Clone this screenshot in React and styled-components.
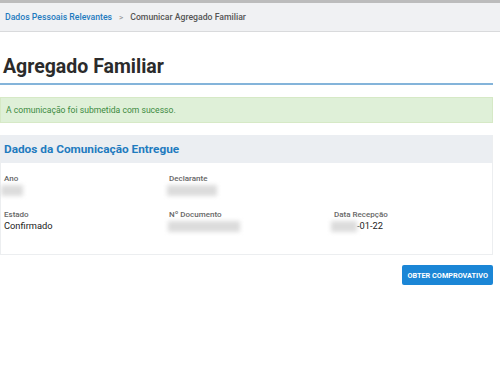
import React from "react";
import styled, { createGlobalStyle } from "styled-components";

const Global = createGlobalStyle`
  html, body { margin: 0; padding: 0; background: #fff; }
  body { font-family: Roboto, "Noto Sans", Arial, sans-serif; color: #333; }
`;

const Page = styled.div`
  width: 500px;
  min-height: 378px;
  display: flex;
  flex-direction: column;
  border-top: 3px solid #bcbcbc;
  box-sizing: border-box;
`;

const Breadcrumb = styled.nav`
  height: 28px;
  background: #f0f1f3;
  border-bottom: 1px solid #d9dadc;
  display: flex;
  align-items: center;
  padding-left: 5px;
  gap: 7px;
  font-size: 8.7px;
  font-weight: 500;
`;

const Crumb = styled.span`
  color: ${(p) => (p.$active ? "#1f7bbf" : "#555")};
`;

const Sep = styled.span`
  color: #999;
  font-size: 8px;
`;

const Content = styled.main`
  padding: 0 7px 0 0;
  display: flex;
  flex-direction: column;
`;

const Title = styled.h1`
  margin: 23px 0 0 0;
  padding: 0 0 4px 3px;
  font-size: 19.5px;
  font-weight: 700;
  color: #2b2b2b;
  line-height: 24px;
  border-bottom: 2px solid #84b4da;
`;

const Alert = styled.div`
  margin-top: 12px;
  height: 26px;
  background: #dff0d8;
  border: 1px solid #d6e9c6;
  box-sizing: border-box;
  display: flex;
  align-items: center;
  padding-left: 5px;
  font-size: 8.6px;
  color: #3c8a3e;
`;

const Card = styled.section`
  margin-top: 12px;
  border: 1px solid #eceef0;
  border-top: none;
`;

const CardHeader = styled.h2`
  margin: 0;
  height: 28px;
  background: #ebeef2;
  display: flex;
  align-items: center;
  padding-left: 3px;
  font-size: 11.8px;
  font-weight: 700;
  color: #1f7bbf;
`;

const Grid = styled.div`
  display: grid;
  grid-template-columns: 165px 165px 1fr;
  row-gap: 13px;
  padding: 10px 0 22px 3px;
`;

const Field = styled.div`
  display: flex;
  flex-direction: column;
`;

const Label = styled.span`
  font-size: 8px;
  font-weight: 500;
  color: #666;
  line-height: 11px;
`;

const Value = styled.span`
  font-size: 9.3px;
  color: #222;
  line-height: 12px;
  height: 12px;
  display: flex;
  align-items: center;
`;

const Blur = styled.span`
  display: inline-block;
  width: ${(p) => p.$w}px;
  height: 11px;
  margin-left: ${(p) => p.$ml || 0}px;
  background: #dcdcdc;
  filter: blur(2px);
`;

const Actions = styled.div`
  display: flex;
  justify-content: flex-end;
  margin-top: 10px;
`;

const Button = styled.button`
  height: 20px;
  padding: 0 5px;
  background: #1b86d6;
  border: none;
  border-radius: 2px;
  color: #fff;
  font-family: Roboto, Arial, sans-serif;
  font-size: 7.3px;
  font-weight: 700;
  text-transform: uppercase;
`;

export default function App() {
  return (
    <>
      <Global />
      <Page>
        <Breadcrumb>
          <Crumb $active>Dados Pessoais Relevantes</Crumb>
          <Sep>&gt;</Sep>
          <Crumb>Comunicar Agregado Familiar</Crumb>
        </Breadcrumb>
        <Content>
          <Title>Agregado Familiar</Title>
          <Alert>A comunicação foi submetida com sucesso.</Alert>
          <Card>
            <CardHeader>Dados da Comunicação Entregue</CardHeader>
            <Grid>
              <Field>
                <Label>Ano</Label>
                <Value><Blur $w={22} $ml={-3} /></Value>
              </Field>
              <Field>
                <Label>Declarante</Label>
                <Value><Blur $w={50} $ml={-2} /></Value>
              </Field>
              <div />
              <Field>
                <Label>Estado</Label>
                <Value>Confirmado</Value>
              </Field>
              <Field>
                <Label>Nº Documento</Label>
                <Value><Blur $w={72} $ml={-1} /></Value>
              </Field>
              <Field>
                <Label>Data Recepção</Label>
                <Value><Blur $w={26} $ml={-3} />-01-22</Value>
              </Field>
            </Grid>
          </Card>
          <Actions>
            <Button>Obter comprovativo</Button>
          </Actions>
        </Content>
      </Page>
    </>
  );
}
